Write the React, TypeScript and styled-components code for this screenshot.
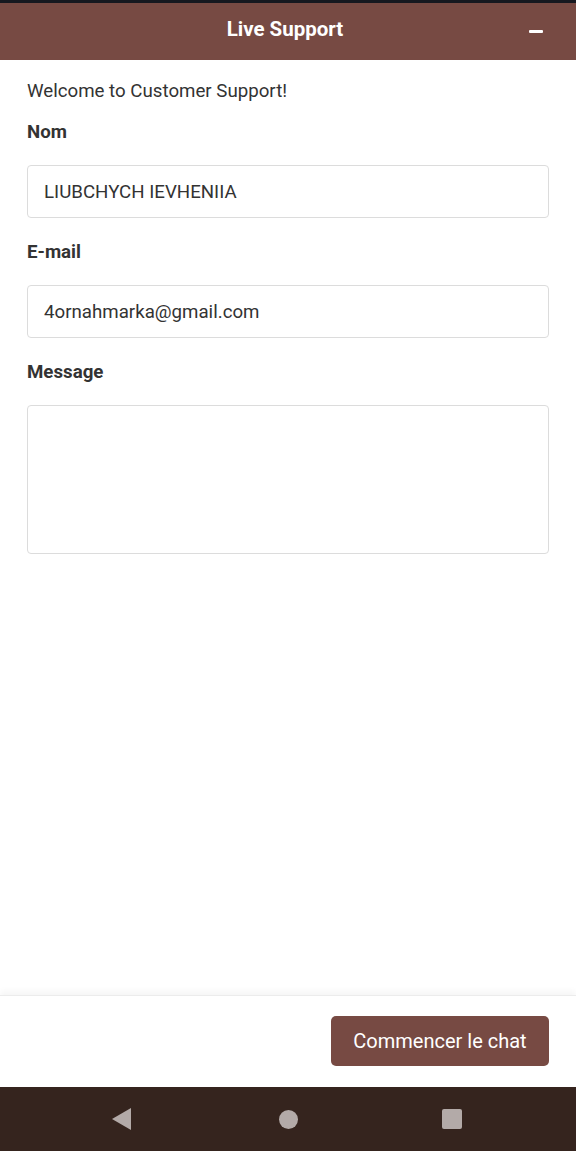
import React from "react";
import styled, { createGlobalStyle } from "styled-components";

const Global = createGlobalStyle`
  html, body { margin: 0; padding: 0; height: 100%; }
  body { font-family: Roboto, "Noto Sans", Arial, sans-serif; background: #fff; }
  #root { height: 100%; }
  * { box-sizing: border-box; }
`;

const Screen = styled.div`
  display: flex;
  flex-direction: column;
  width: 576px;
  height: 1151px;
  background: #fff;
`;

const StatusStrip = styled.div`
  height: 3px;
  background: #16181f;
`;

const Header = styled.header`
  position: relative;
  height: 57px;
  padding: 0 6px 5px 0;
  background: #774a43;
  display: flex;
  align-items: center;
  justify-content: center;
`;

const Title = styled.h1`
  margin: 0;
  font-size: 20.5px;
  font-weight: 700;
  color: #fff;
`;

const MinButton = styled.button`
  position: absolute;
  right: 33px;
  top: 27px;
  width: 14px;
  height: 3px;
  border: 0;
  padding: 0;
  border-radius: 1px;
  background: #fff;
`;

const Body = styled.main`
  flex: 1;
  padding: 20px 27px 0;
  display: flex;
  flex-direction: column;
`;

const Welcome = styled.p`
  margin: 0 0 19px;
  font-size: 18.7px;
  line-height: 22px;
  color: #333;
`;

const Label = styled.label`
  display: block;
  font-size: 18.7px;
  font-weight: 700;
  color: #333;
  line-height: 22px;
  margin-bottom: 22px;
`;

const Field = styled.div`
  display: flex;
  flex-direction: column;
  margin-bottom: 23px;
`;

const Input = styled.div`
  height: 53px;
  border: 1px solid #dcdcdc;
  border-radius: 4px;
  padding: 0 16px;
  display: flex;
  align-items: center;
  font-size: 18.7px;
  color: #333;
`;

const TextArea = styled.div`
  height: 149px;
  border: 1px solid #dcdcdc;
  border-radius: 4px;
`;

const Footer = styled.footer`
  height: 92px;
  border-top: 1px solid #ececec;
  box-shadow: 0 -4px 6px rgba(0, 0, 0, 0.04);
  display: flex;
  align-items: center;
  justify-content: flex-end;
  padding: 0 27px 0 0;
`;

const StartButton = styled.button`
  width: 218px;
  height: 50px;
  border: 0;
  border-radius: 5px;
  background: #774a43;
  color: #fff;
  font-family: Roboto, Arial, sans-serif;
  font-size: 20px;
  margin-top: -2px;
`;

const NavBar = styled.nav`
  height: 64px;
  background: #35241e;
  display: flex;
  align-items: center;
  justify-content: space-between;
  padding: 0 114px 0 112px;
`;

const Back = styled.div`
  width: 0;
  height: 0;
  border-top: 11px solid transparent;
  border-bottom: 11px solid transparent;
  border-right: 19px solid #b3aaa8;
`;

const Home = styled.div`
  width: 19px;
  height: 19px;
  border-radius: 50%;
  background: #b3aaa8;
  margin-left: 4px;
`;

const Recents = styled.div`
  width: 20px;
  height: 20px;
  border-radius: 2px;
  background: #b3aaa8;
`;

export default function App() {
  return (
    <>
      <Global />
      <Screen>
        <StatusStrip />
        <Header>
          <Title>Live Support</Title>
          <MinButton aria-label="minimize" />
        </Header>
        <Body>
          <Welcome>Welcome to Customer Support!</Welcome>
          <Field>
            <Label>Nom</Label>
            <Input>LIUBCHYCH IEVHENIIA</Input>
          </Field>
          <Field>
            <Label>E-mail</Label>
            <Input>4ornahmarka@gmail.com</Input>
          </Field>
          <Field>
            <Label>Message</Label>
            <TextArea />
          </Field>
        </Body>
        <Footer>
          <StartButton>Commencer le chat</StartButton>
        </Footer>
        <NavBar>
          <Back />
          <Home />
          <Recents />
        </NavBar>
      </Screen>
    </>
  );
}
